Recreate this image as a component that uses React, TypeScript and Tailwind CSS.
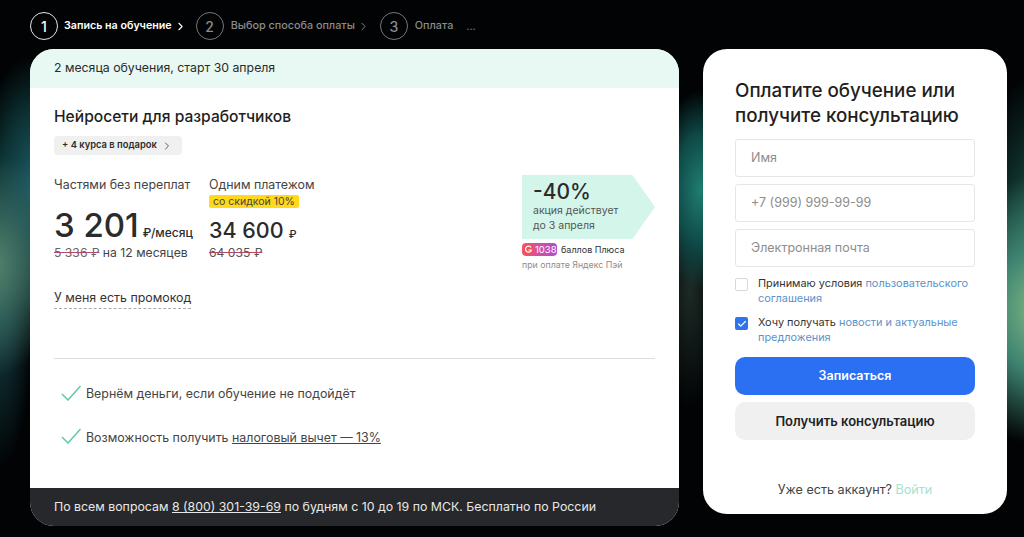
import { ChevronRight, Check } from 'lucide-react';

const font = "font-['Inter','Noto_Sans',sans-serif]";

function Step({ n, label, active }: { n: number; label: string; active?: boolean }) {
  return (
    <div className={active ? 'flex items-center text-white' : 'flex items-center text-[#8b8b8b]'}>
      <div className={active
        ? 'flex h-[28px] w-[28px] items-center justify-center rounded-full border border-[#e5e5e5] text-[14px] font-medium'
        : 'flex h-[28px] w-[28px] items-center justify-center rounded-full border border-[#777] text-[14px] font-medium'}>
        {n}
      </div>
      <span className={active ? 'ml-[6px] text-[10.7px] font-semibold' : 'ml-[7px] text-[10.8px] font-medium'}>{label}</span>
    </div>
  );
}

function Field({ placeholder }: { placeholder: string }) {
  return (
    <div className="flex h-[38px] items-center rounded-[3px] border border-[#e4e6e8] bg-white pl-[15px] text-[12.5px] text-[#8d8d8d]">
      {placeholder}
    </div>
  );
}

function Tick() {
  return (
    <svg width="20" height="16" viewBox="0 0 20 16" fill="none" className="ml-[7px] mt-[-3px] shrink-0">
      <path d="M1 9l6 6L19.5 1" stroke="#5ec9a5" strokeWidth="1.5" />
    </svg>
  );
}

export default function App() {
  return (
    <div className={`${font} h-[537px] w-[1024px] overflow-hidden bg-[#010304] bg-[radial-gradient(ellipse_70px_110px_at_-5px_265px,#54826c_0%,rgba(60,110,100,0.6)_55%,transparent_100%),radial-gradient(ellipse_60px_130px_at_35px_185px,#1d5d69_0%,rgba(18,70,72,0.7)_55%,transparent_100%),radial-gradient(ellipse_35px_170px_at_0px_300px,#17444a_0%,transparent_100%),radial-gradient(ellipse_100px_135px_at_1040px_310px,#84bb87_0%,#3e8470_45%,transparent_100%),radial-gradient(ellipse_70px_170px_at_1040px_240px,#1c5a50_0%,transparent_100%),radial-gradient(ellipse_45px_100px_at_700px_190px,#1f7d70_0%,#0e4a47_55%,transparent_100%),radial-gradient(ellipse_30px_120px_at_690px_290px,#1d2a26_0%,transparent_100%)] pl-[30px]`}>
      {/* Steps */}
      <div className="flex h-[49px] items-center pt-[3px]">
        <Step n={1} label="Запись на обучение" active />
        <ChevronRight size={13} strokeWidth={2} className="ml-[2px] text-white" />
        <div className="ml-[9px]"><Step n={2} label="Выбор способа оплаты" /></div>
        <ChevronRight size={13} strokeWidth={1.75} className="ml-[2px] text-[#8b8b8b]" />
        <div className="ml-[10px]"><Step n={3} label="Оплата" /></div>
        <span className="ml-[13px] text-[11px] text-[#777]">...</span>
      </div>

      <div className="flex items-start">
        {/* Course card */}
        <div className="flex h-[477px] w-[649px] flex-col overflow-hidden rounded-[24px] bg-white text-[#2b2b2b]">
          <div className="flex h-[39px] shrink-0 items-center bg-[#e8f8f2] pl-[24px] text-[12.3px]">
            2 месяца обучения, старт 30 апреля
          </div>

          <div className="flex-1 px-[24px]">
            <h1 className="mt-[19px] text-[15.6px] font-medium leading-[20px] text-[#1f1f1f]">Нейросети для разработчиков</h1>
            <div className="mt-[9px] inline-flex h-[19px] items-center rounded-[4px] bg-[#f0f0f0] pl-[8px] pr-[9px] text-[9.4px] font-semibold">
              + 4 курса в подарок
              <ChevronRight size={12} strokeWidth={1.5} className="ml-[4px]" />
            </div>

            <div className="relative mt-[22px] flex h-[113px]">
              <div className="w-[155px]">
                <div className="text-[12.4px] leading-[16px] text-[#444]">Частями без переплат</div>
                <div className="mt-[12px] flex items-baseline">
                  <span className="text-[33px] font-medium leading-[40px]">3 201</span>
                  <span className="ml-[4px] text-[12px] font-medium">₽/месяц</span>
                </div>
                <div className="text-[12.2px] leading-[16px] text-[#444]">
                  <span className="text-[#666] line-through decoration-[#b5476b]">5 336 ₽</span> на 12 месяцев
                </div>
              </div>
              <div>
                <div className="text-[12.4px] leading-[16px] text-[#444]">Одним платежом</div>
                <div className="mt-[2px] w-fit rounded-[2px] bg-[#ffd91a] px-[4px] text-[10.5px] leading-[13px] text-[#444]">со скидкой 10%</div>
                <div className="mt-[7px] flex items-baseline">
                  <span className="text-[21.5px] font-medium leading-[30px]">34 600</span>
                  <span className="ml-[5px] text-[11px] font-medium">₽</span>
                </div>
                <div className="text-[12.2px] leading-[16px] text-[#555] line-through decoration-[#b5476b]">64 035 ₽</div>
              </div>

              {/* Sale badge */}
              <div className="absolute left-[468px] top-[-2px] w-[134px]">
                <div className="flex h-[64px] w-[133px] flex-col justify-center bg-[#d4f5ea] pl-[11px] [clip-path:polygon(0_0,83%_0,100%_50%,83%_100%,0_100%)]">
                  <div className="text-[21px] font-medium leading-[22px]">-40%</div>
                  <div className="text-[10.5px] leading-[15px] text-[#555]">акция действует<br />до 3 апреля</div>
                </div>
                <div className="mt-[4px] flex items-center">
                  <span className="flex h-[13px] w-[35px] items-center rounded-[4px] bg-[linear-gradient(90deg,#f0576b,#b04bd6)] pl-[1px] text-[9.5px] text-white">
                    <svg width="11" height="11" viewBox="0 0 11 11" fill="none" className="mr-[1px] shrink-0">
                      <circle cx="5.5" cy="5.5" r="5.5" fill="#f2505f" />
                      <path d="M8 3.5A3 3 0 1 0 8.4 6H5.5" stroke="#fff" strokeWidth="1.2" />
                    </svg>
                    1038
                  </span>
                  <span className="ml-[4px] text-[9px] text-[#333]">баллов Плюса</span>
                </div>
                <div className="mt-[1px] text-[8.8px] text-[#8d8d8d]">при оплате Яндекс Пэй</div>
              </div>
            </div>

            <div className="w-fit border-b border-dashed border-[#aaa] pb-[2px] text-[12.4px] leading-[16px] text-[#333]">У меня есть промокод</div>

            <div className="mt-[49px] h-px bg-[#dedede]" />

            <div className="mt-[26px] flex items-center">
              <Tick />
              <span className="ml-[5px] text-[12.4px] text-[#444]">Вернём деньги, если обучение не подойдёт</span>
            </div>
            <div className="mt-[25px] flex items-center">
              <Tick />
              <span className="ml-[5px] text-[12.4px] text-[#444]">
                Возможность получить <span className="underline">налоговый вычет — 13%</span>
              </span>
            </div>
          </div>

          <div className="flex h-[38px] shrink-0 items-center bg-[#26282b] pl-[24px] text-[12.35px] text-[#e8e8e8]">
            По всем вопросам&nbsp;<span className="underline">8 (800) 301-39-69</span>&nbsp;по будням с 10 до 19 по МСК. Бесплатно по России
          </div>
        </div>

        {/* Form card */}
        <div className="ml-[24px] flex h-[465px] w-[304px] flex-col rounded-[24px] bg-white px-[32px]">
          <h2 className="mt-[29px] text-[18.8px] font-medium leading-[25px] text-[#1f1f1f]">
            Оплатите обучение или<br />получите консультацию
          </h2>
          <div className="mt-[11px] flex flex-col gap-[7px]">
            <Field placeholder="Имя" />
            <Field placeholder="+7 (999) 999-99-99" />
            <Field placeholder="Электронная почта" />
          </div>
          <div className="mt-[9px] flex items-start">
            <div className="mt-[2px] h-[13px] w-[13px] shrink-0 rounded-[2px] border border-[#d8d8d8]" />
            <p className="ml-[10px] text-[10.9px] leading-[15px] text-[#333]">
              Принимаю условия <span className="text-[#5b93c9]">пользовательского соглашения</span>
            </p>
          </div>
          <div className="mt-[9px] flex items-start">
            <div className="mt-[2px] flex h-[13px] w-[13px] shrink-0 items-center justify-center rounded-[2px] bg-[#2f74ec]">
              <Check size={10} strokeWidth={3} className="text-white" />
            </div>
            <p className="ml-[10px] text-[10.9px] leading-[15px] text-[#333]">
              Хочу получать <span className="text-[#5b93c9]">новости и актуальные предложения</span>
            </p>
          </div>
          <div className="mt-[12px] flex h-[38px] items-center justify-center rounded-[10px] bg-[#2b6ff2] pt-[1px] text-[12.5px] font-semibold text-white">Записаться</div>
          <div className="mt-[7px] flex h-[38px] items-center justify-center rounded-[10px] bg-[#f0f0f0] pt-[1px] text-[13px] font-semibold text-[#222]">Получить консультацию</div>
          <div className="mt-[41px] text-center text-[12.6px] text-[#444]">
            Уже есть аккаунт? <span className="text-[#a3e3cc]">Войти</span>
          </div>
        </div>
      </div>
    </div>
  );
}
